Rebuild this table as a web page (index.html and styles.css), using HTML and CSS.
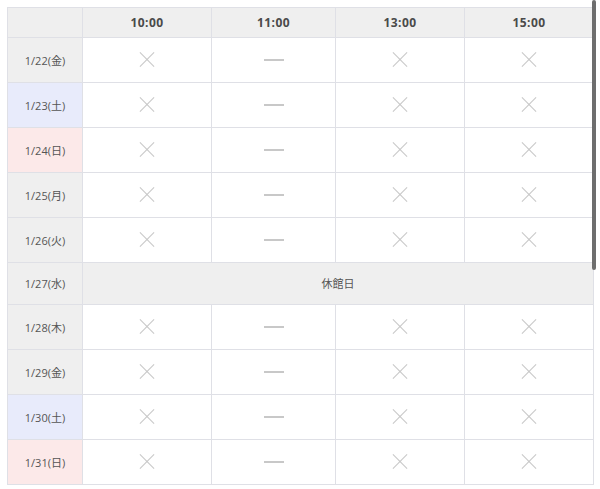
FILE: index.html
```html
<!DOCTYPE html>
<html lang="ja">
<head>
<meta charset="utf-8">
<link rel="stylesheet" href="styles.css">
</head>
<body>
<div class="wrap">
<table class="sched">
  <colgroup>
    <col class="c-date"><col class="c-wide"><col class="c-mid"><col class="c-wide"><col class="c-wide">
  </colgroup>
  <thead>
    <tr><th class="corner"></th><th>10:00</th><th>11:00</th><th>13:00</th><th>15:00</th></tr>
  </thead>
  <tbody>
    <tr><th class="d">1/22(金)</th><td><i class="x"></i></td><td><i class="dash"></i></td><td><i class="x"></i></td><td><i class="x"></i></td></tr>
    <tr><th class="d sat">1/23(土)</th><td><i class="x"></i></td><td><i class="dash"></i></td><td><i class="x"></i></td><td><i class="x"></i></td></tr>
    <tr><th class="d sun">1/24(日)</th><td><i class="x"></i></td><td><i class="dash"></i></td><td><i class="x"></i></td><td><i class="x"></i></td></tr>
    <tr><th class="d">1/25(月)</th><td><i class="x"></i></td><td><i class="dash"></i></td><td><i class="x"></i></td><td><i class="x"></i></td></tr>
    <tr><th class="d">1/26(火)</th><td><i class="x"></i></td><td><i class="dash"></i></td><td><i class="x"></i></td><td><i class="x"></i></td></tr>
    <tr class="closed"><th class="d">1/27(水)</th><td colspan="4" class="holiday">休館日</td></tr>
    <tr><th class="d">1/28(木)</th><td><i class="x"></i></td><td><i class="dash"></i></td><td><i class="x"></i></td><td><i class="x"></i></td></tr>
    <tr><th class="d">1/29(金)</th><td><i class="x"></i></td><td><i class="dash"></i></td><td><i class="x"></i></td><td><i class="x"></i></td></tr>
    <tr><th class="d sat">1/30(土)</th><td><i class="x"></i></td><td><i class="dash"></i></td><td><i class="x"></i></td><td><i class="x"></i></td></tr>
    <tr><th class="d sun">1/31(日)</th><td><i class="x"></i></td><td><i class="dash"></i></td><td><i class="x"></i></td><td><i class="x"></i></td></tr>
  </tbody>
</table>
<div class="scrollbar"></div>
</div>
</body>
</html>
```
FILE: styles.css
```css
html, body {
  margin: 0;
  padding: 0;
  background: #fff;
}
body {
  font-family: "Open Sans", "Noto Sans CJK JP", sans-serif;
  color: #555;
}
.wrap {
  position: relative;
  padding: 7px 7px 0 7px;
  width: 586px;
  height: 482px;
  overflow: hidden;
}
.sched {
  border-collapse: collapse;
  table-layout: fixed;
  width: 587px;
}
.c-date { width: 75px; }
.c-wide { width: 129px; }
.c-mid { width: 124px; }
.sched th, .sched td {
  border: 1px solid #dfe0e6;
  padding: 0;
  text-align: center;
  vertical-align: middle;
  line-height: 1;
}
.sched thead th {
  height: 29px;
  background: #efefef;
  font-size: 12px;
  font-weight: 700;
  color: #4a4a4a;
  letter-spacing: 0.4px;
}
.sched tbody tr { height: 45px; }
.sched tbody tr.closed { height: 42px; }
.sched th.d {
  background: #efefef;
  font-size: 11px;
  font-weight: 400;
  color: #555;
  font-family: "Open Sans", "Noto Sans CJK JP", sans-serif;
}
.sched th.sat { background: #e8ebfb; }
.sched th.sun { background: #fce9e9; }
.sched td { background: #fff; }
.sched td.holiday {
  background: #efefef;
  font-size: 11px;
  color: #555;
  font-family: "Noto Sans CJK JP", sans-serif;
}
.x {
  display: block;
  position: relative;
  width: 16px;
  height: 16px;
  margin: 0 auto;
  top: -1px;
}
.x::before, .x::after {
  content: "";
  position: absolute;
  left: -2px;
  top: 7.5px;
  width: 20px;
  height: 1px;
  background: #c6c6c6;
  transform: rotate(45deg);
}
.x::after { transform: rotate(-45deg); }
.dash {
  display: block;
  width: 20px;
  height: 1.5px;
  margin: 0 auto;
  background: #c8c8c8;
}
.scrollbar {
  position: absolute;
  left: 592px;
  top: 0;
  width: 4px;
  height: 270px;
  background: #6e6e6e;
  border-radius: 2px;
}
```
